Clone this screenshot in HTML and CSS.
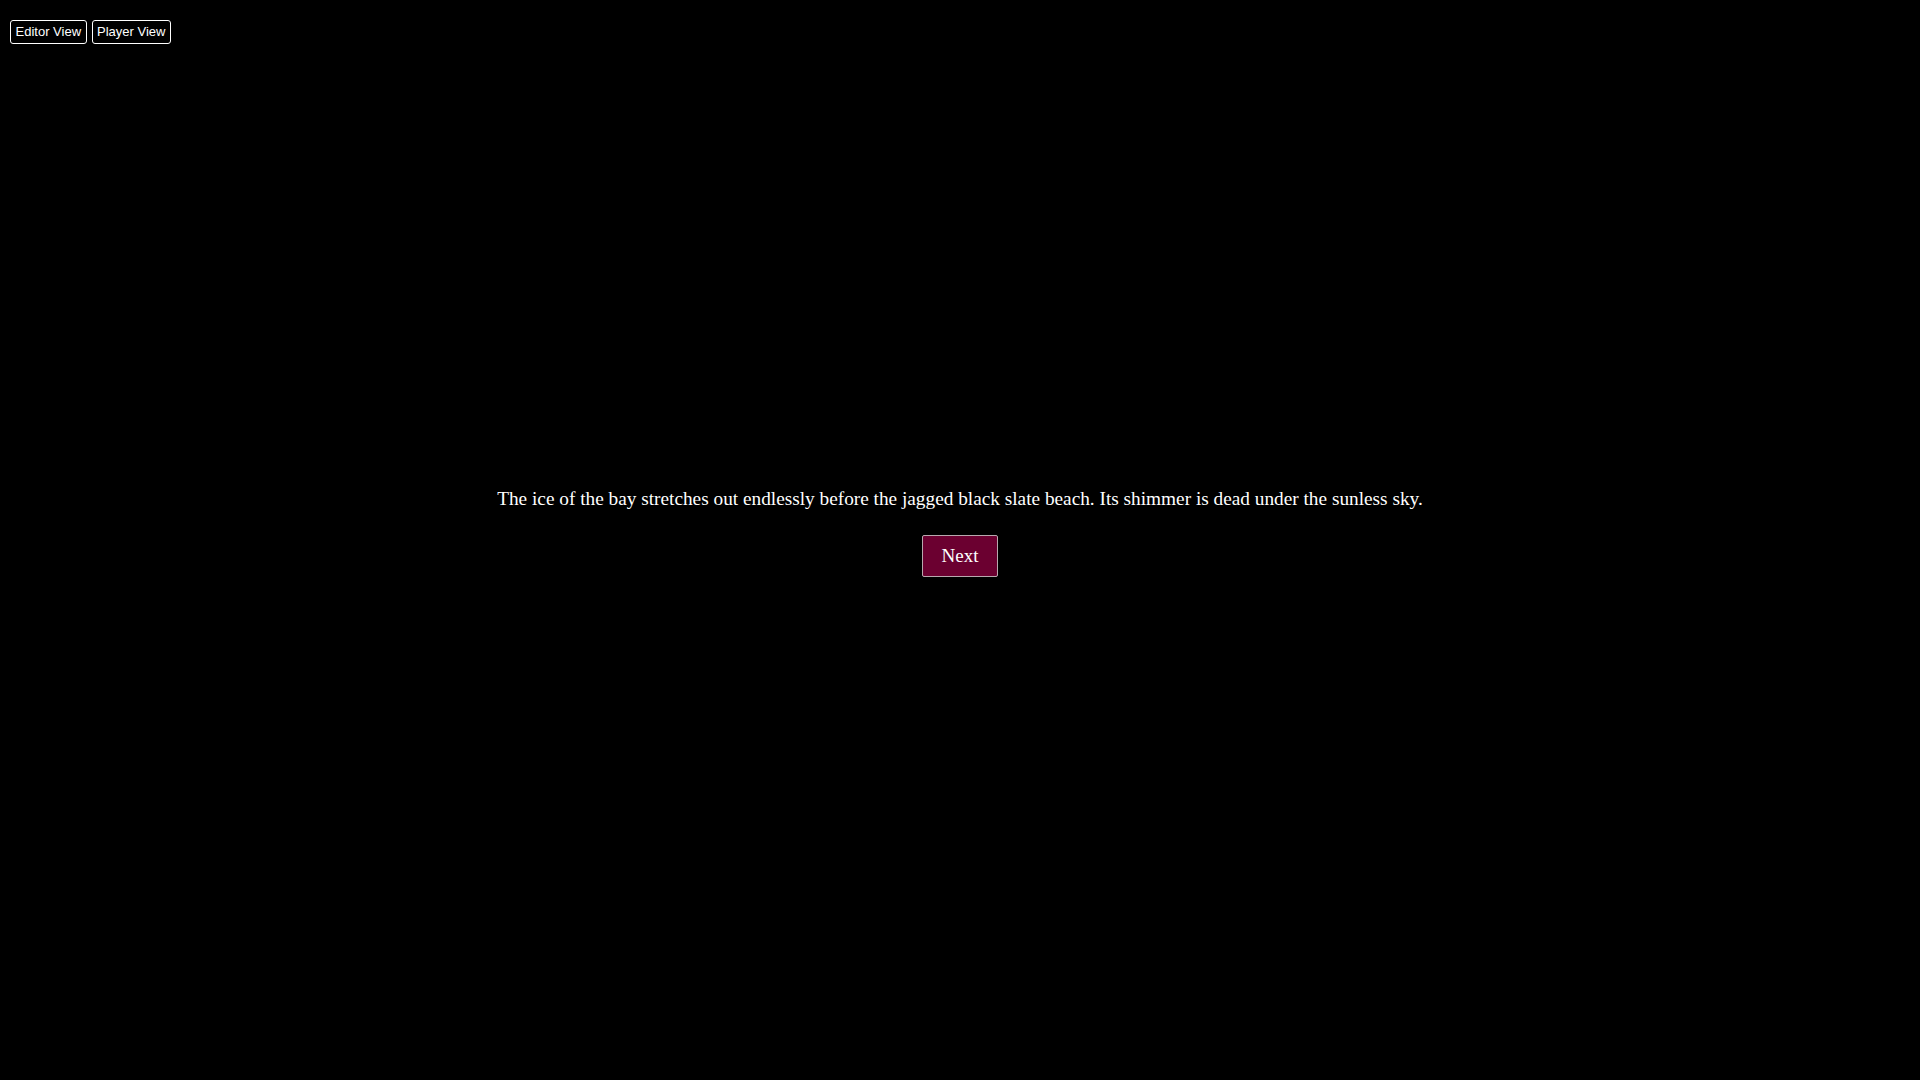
FILE: index.html
```html
<!DOCTYPE html>
<html lang="en">
<head>
<meta charset="utf-8">
<title>Player View</title>
<link rel="stylesheet" href="styles.css">
</head>
<body>
<div class="toolbar">
  <button class="tool-btn">Editor View</button>
  <button class="tool-btn">Player View</button>
</div>
<main class="stage">
  <p class="passage">The ice of the bay stretches out endlessly before the jagged black slate beach. Its shimmer is dead under the sunless sky.</p>
  <button class="next-btn">Next</button>
</main>
</body>
</html>
```
FILE: styles.css
```css
html, body {
  margin: 0;
  padding: 0;
  background: #000;
  height: 100%;
}
body {
  display: flex;
  flex-direction: column;
}
.toolbar {
  display: flex;
  gap: 5px;
  padding: 20px 10px 0;
}
.tool-btn {
  font-family: "Liberation Sans", Arial, sans-serif;
  font-size: 13px;
  color: #fff;
  background: #000;
  border: 1px solid #fff;
  border-radius: 3px;
  height: 24px;
  padding: 0 4.5px;
  line-height: 20px;
}
.stage {
  flex: 1;
  display: flex;
  flex-direction: column;
  align-items: center;
  justify-content: center;
  padding-bottom: 60px;
}
.passage {
  font-family: "Liberation Serif", "Times New Roman", serif;
  font-size: 19.3px;
  color: #fff;
  margin: 0 0 24px;
  line-height: 24px;
}
.next-btn {
  font-family: "Liberation Serif", "Times New Roman", serif;
  font-size: 19px;
  color: #fff;
  background: #6b0030;
  border: 1px solid #b8a8ae;
  border-radius: 2px;
  width: 76px;
  height: 42px;
  padding: 0;
}
```
